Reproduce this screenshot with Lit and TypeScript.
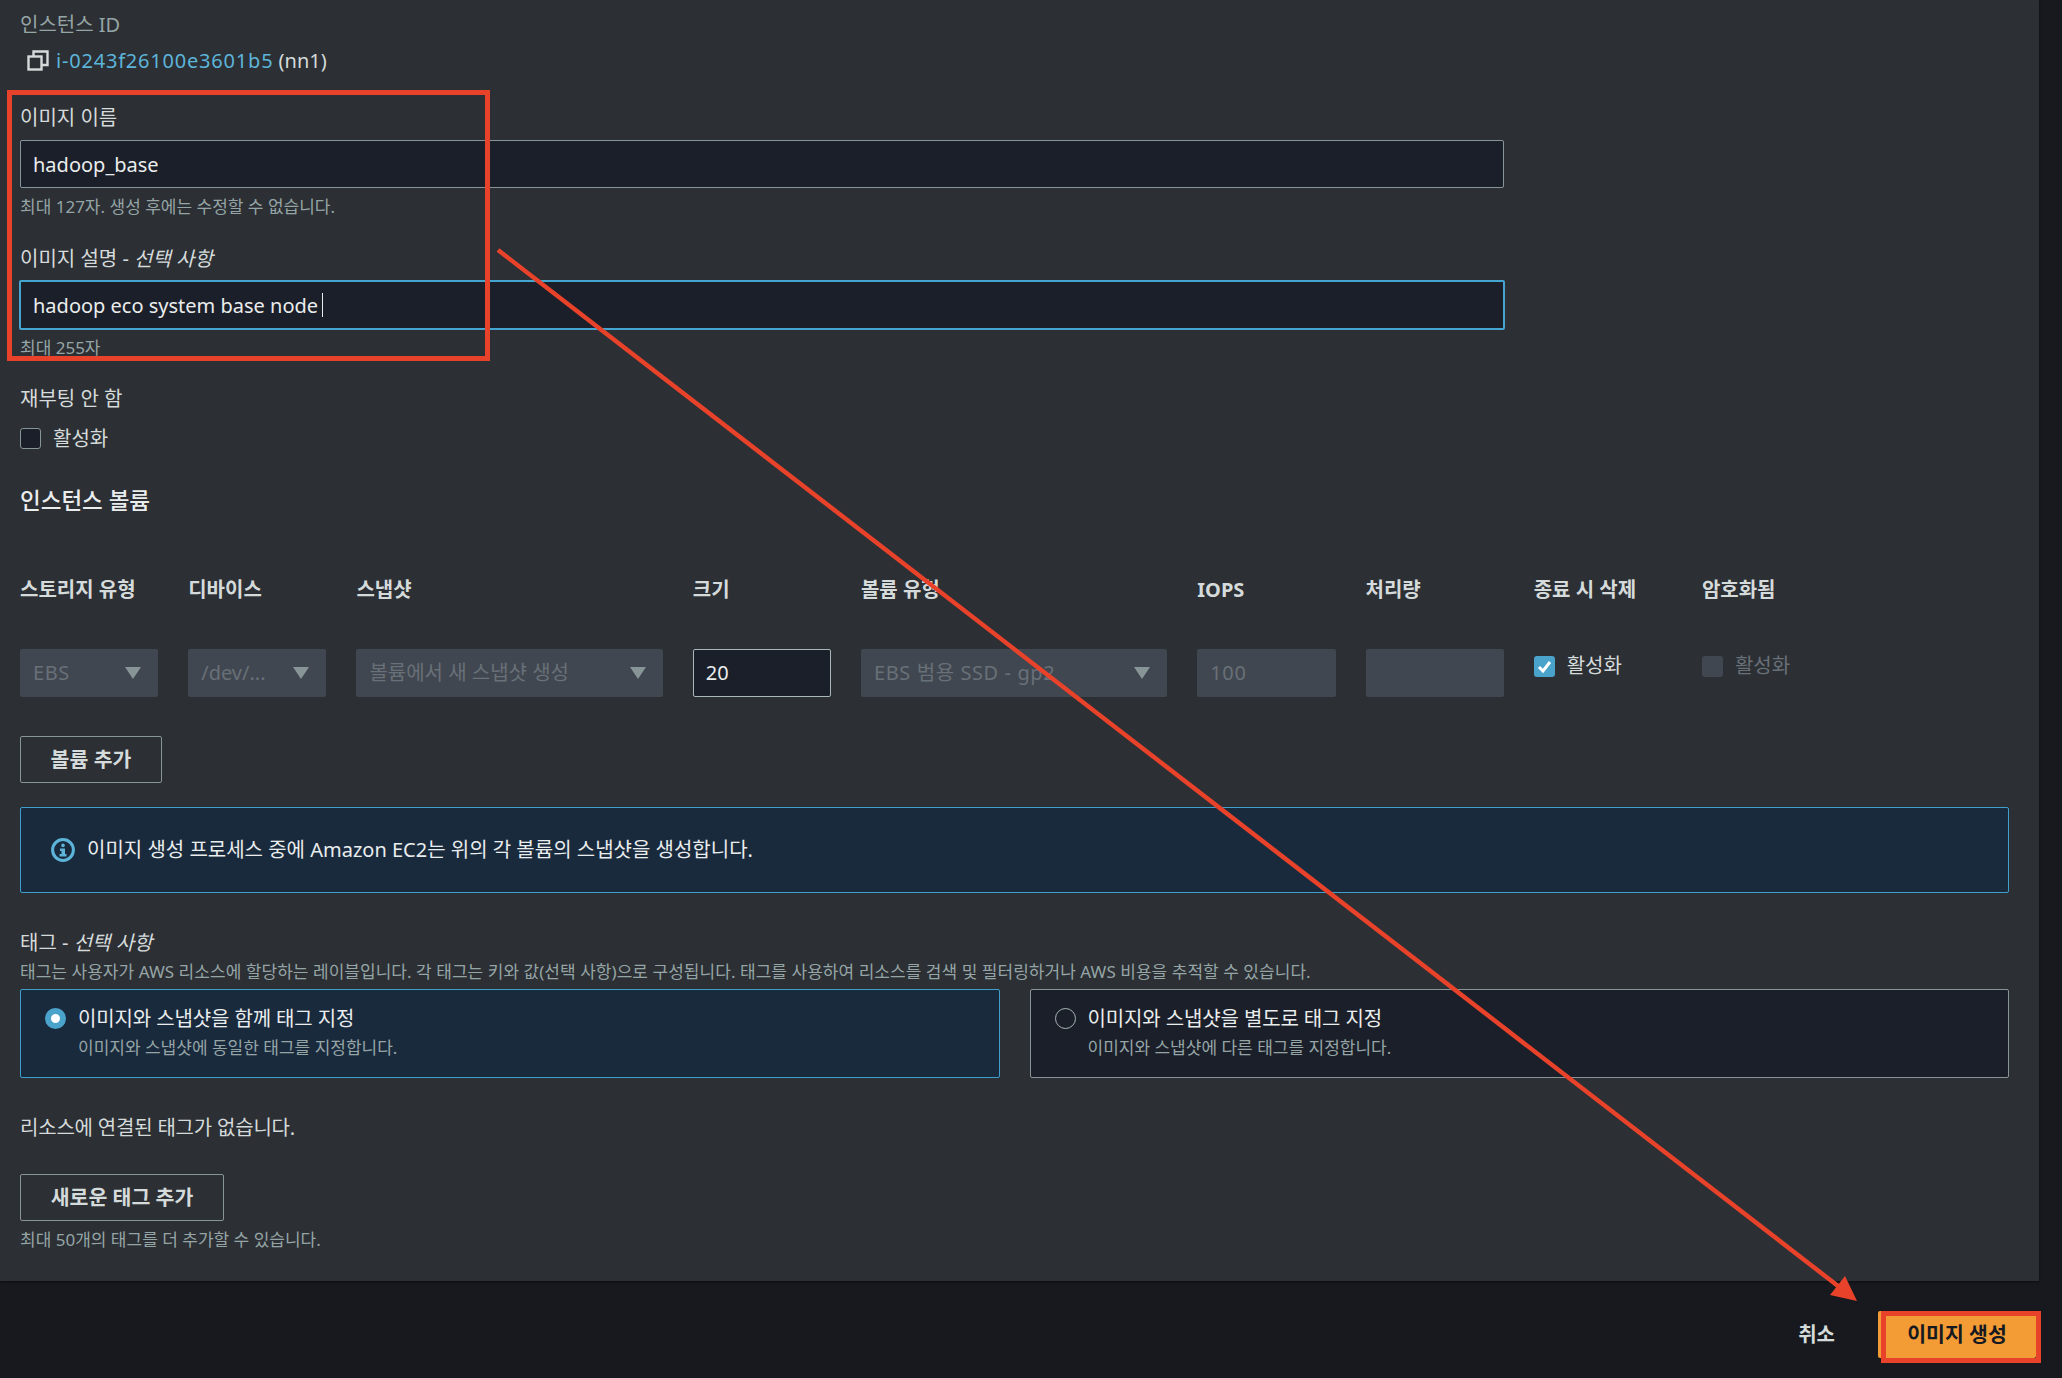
import { LitElement, html, css } from "lit";
import { customElement } from "lit/decorators.js";

interface VolumeColumn {
  title: string;
  span?: number;
}

const COLUMNS: VolumeColumn[] = [
  { title: "스토리지 유형" },
  { title: "디바이스" },
  { title: "스냅샷", span: 2 },
  { title: "크기" },
  { title: "볼륨 유형", span: 2 },
  { title: "IOPS" },
  { title: "처리량" },
  { title: "종료 시 삭제" },
  { title: "암호화됨" },
];

@customElement("app-root")
export class AppRoot extends LitElement {
  static styles = css`
    :host {
      display: block;
      position: relative;
      width: 2062px;
      height: 1378px;
      overflow: hidden;
      background: #17191e;
      color: #d5dbdb;
      font-family: "Noto Sans", "Noto Sans CJK KR", sans-serif;
      font-size: 20px;
      line-height: 24px;
    }

    .panel {
      width: 2039px;
      height: 1281px;
      box-sizing: border-box;
      padding: 12px 30px 0 20px;
      background: #2c2f34;
      box-shadow: 0 1px 2px #0b0d10;
    }

    /* text rows sit 1px below their box centre */
    .row {
      height: 24px;
      line-height: 26px;
    }

    .muted {
      color: #95a5a6;
    }

    .instance {
      display: flex;
      align-items: center;
      gap: 7px;
      height: 24px;
      margin: 12px 0 33px 7px;
    }

    .instance svg {
      flex: none;
    }

    .instance span {
      padding-top: 2px;
    }

    .instance a {
      color: #5cb5d9;
      letter-spacing: 0.8px;
    }

    .field-input {
      display: flex;
      align-items: center;
      box-sizing: border-box;
      width: 1484px;
      height: 48px;
      margin-top: 11px;
      padding: 2px 12px 0;
      background: #1b1f29;
      border: 1px solid #879596;
      border-radius: 2px;
      color: #eaeded;
    }

    .field-input.focus {
      width: 1486px;
      height: 50px;
      margin: 10px 0 0 -1px;
      border: 2px solid #44a5d0;
    }

    .caret {
      width: 1px;
      height: 24px;
      margin: -2px 0 0 4px;
      background: #eaeded;
    }

    .help {
      height: 20px;
      font-size: 17px;
      line-height: 22px;
      color: #95a5a6;
    }

    .help.name {
      margin: 8px 0 30px;
    }

    .help.desc {
      margin: 7px 0 29px;
    }

    em {
      font-style: italic;
    }

    .check-row {
      display: flex;
      align-items: center;
      gap: 12px;
      height: 24px;
      margin-top: 16px;
    }

    .check-row span:last-child {
      padding-top: 2px;
    }

    .box {
      box-sizing: border-box;
      flex: none;
      width: 21px;
      height: 21px;
      background: #1b1f29;
      border: 1px solid #879596;
      border-radius: 3px;
    }

    .box.on {
      display: flex;
      align-items: center;
      justify-content: center;
      background: #4aa3cb;
      border: none;
    }

    .box.off {
      background: #414750;
      border: none;
    }

    h2 {
      height: 30px;
      margin: 35px 0 0;
      font-size: 22.5px;
      font-weight: 500;
      line-height: 32px;
      color: #eaeded;
    }

    .volumes {
      display: grid;
      grid-template-columns: repeat(11, 138.2px);
      column-gap: 30px;
      margin-top: 62px;
    }

    .head {
      font-weight: 700;
      white-space: nowrap;
    }

    .cell {
      display: flex;
      align-items: flex-start;
      height: 48px;
      margin-top: 48px;
    }

    .select,
    .disabled-input {
      display: flex;
      align-items: center;
      justify-content: space-between;
      box-sizing: border-box;
      width: 100%;
      height: 48px;
      padding: 0 17px 0 13px;
      background: #414750;
      border-radius: 2px;
      color: #687078;
      white-space: nowrap;
    }

    .latin {
      letter-spacing: 0.6px;
    }

    .select i {
      flex: none;
      width: 0;
      height: 0;
      border-left: 8px solid transparent;
      border-right: 8px solid transparent;
      border-top: 12px solid #879596;
    }

    .size-input {
      display: flex;
      align-items: center;
      box-sizing: border-box;
      width: 100%;
      height: 48px;
      padding: 0 12px;
      background: #1b1f29;
      border: 1px solid #aab7b8;
      border-radius: 2px;
      color: #eaeded;
    }

    .inline-check {
      display: flex;
      align-items: center;
      gap: 12px;
      margin-top: 5px;
      white-space: nowrap;
    }

    .inline-check.off {
      color: #687078;
    }

    .button {
      display: flex;
      align-items: center;
      justify-content: center;
      box-sizing: border-box;
      height: 47px;
      padding-bottom: 2px;
      background: transparent;
      border: 1px solid #879596;
      border-radius: 2px;
      font-size: 20.5px;
      font-weight: 700;
      color: #d5dbdb;
    }

    .add-volume {
      width: 142px;
      margin-top: 39px;
    }

    .info {
      display: flex;
      align-items: center;
      gap: 12px;
      box-sizing: border-box;
      height: 86px;
      margin-top: 24px;
      padding-left: 30px;
      background: #1a2a3d;
      border: 1px solid #3f9fcc;
      border-radius: 2px;
      color: #eaeded;
    }

    .tag-label {
      margin-top: 37px;
    }

    .help.tag-desc {
      margin-top: 8px;
      line-height: 20px;
      letter-spacing: 0.04px;
    }

    .cards {
      display: flex;
      gap: 30px;
      margin-top: 7px;
    }

    .card {
      display: flex;
      gap: 12px;
      flex: 1;
      box-sizing: border-box;
      height: 89px;
      padding: 16px 24px;
      background: #1b1f29;
      border: 1px solid #879596;
      border-radius: 2px;
    }

    .card.selected {
      background: #1a2a3d;
      border-color: #3f9fcc;
    }

    .radio {
      box-sizing: border-box;
      flex: none;
      width: 21px;
      height: 21px;
      margin-top: 2px;
      border: 1px solid #aab7b8;
      border-radius: 50%;
    }

    .radio.on {
      border: 6px solid #4aa3cb;
      background: #fff;
    }

    .card-title {
      letter-spacing: -0.12px;
      color: #eaeded;
    }

    .card-sub {
      margin-top: 7px;
    }

    .no-tags {
      margin-top: 37px;
      letter-spacing: -0.2px;
    }

    .add-tag {
      width: 204px;
      margin-top: 35px;
    }

    .help.limit {
      margin-top: 8px;
    }

    .footer {
      display: flex;
      align-items: center;
      justify-content: flex-end;
      gap: 43px;
      height: 97px;
      padding: 10px 26px 0 0;
      box-sizing: border-box;
    }

    .cancel {
      font-weight: 700;
      color: #d5dbdb;
    }

    .primary {
      display: flex;
      align-items: center;
      justify-content: center;
      box-sizing: border-box;
      width: 158px;
      height: 47px;
      padding-bottom: 2px;
      background: #f39c36;
      border-radius: 2px;
      font-size: 20.5px;
      font-weight: 700;
      color: #16191f;
    }

    .annotations {
      position: absolute;
      inset: 0;
      pointer-events: none;
    }
  `;

  private renderCheck(on: boolean) {
    return html`
      <span class="inline-check ${on ? "" : "off"}">
        <span class="box ${on ? "on" : "off"}">
          ${on
            ? html`<svg width="15" height="15" viewBox="0 0 15 15">
                <path d="M2 8 L6 12 L13 3" fill="none" stroke="#fff" stroke-width="3" />
              </svg>`
            : ""}
        </span>
        활성화
      </span>
    `;
  }

  private renderVolumeRow() {
    return html`
      <div class="cell"><div class="select latin">EBS<i></i></div></div>
      <div class="cell"><div class="select">/dev/...<i></i></div></div>
      <div class="cell" style="grid-column: span 2">
        <div class="select">볼륨에서 새 스냅샷 생성<i></i></div>
      </div>
      <div class="cell"><div class="size-input">20</div></div>
      <div class="cell" style="grid-column: span 2">
        <div class="select latin">EBS 범용 SSD - gp2<i></i></div>
      </div>
      <div class="cell"><div class="disabled-input latin">100</div></div>
      <div class="cell"><div class="disabled-input"></div></div>
      <div class="cell">${this.renderCheck(true)}</div>
      <div class="cell">${this.renderCheck(false)}</div>
    `;
  }

  render() {
    return html`
      <div class="panel">
        <div class="row muted">인스턴스 ID</div>
        <div class="instance">
          <svg width="22" height="21" viewBox="0 0 22 21" fill="none" stroke="#d5dbdb" stroke-width="2.4">
            <rect x="1.5" y="6.5" width="13" height="13" />
            <path d="M6.5 6.5 V1.5 H20.5 V15 H14.5" />
          </svg>
          <span><a>i-0243f26100e3601b5</a> (nn1)</span>
        </div>

        <div class="row">이미지 이름</div>
        <div class="field-input">hadoop_base</div>
        <div class="help name">최대 127자. 생성 후에는 수정할 수 없습니다.</div>

        <div class="row">이미지 설명 - <em>선택 사항</em></div>
        <div class="field-input focus">hadoop eco system base node<span class="caret"></span></div>
        <div class="help desc">최대 255자</div>

        <div class="row">재부팅 안 함</div>
        <div class="check-row"><span class="box"></span><span>활성화</span></div>

        <h2>인스턴스 볼륨</h2>

        <div class="volumes">
          ${COLUMNS.map(
            (col) => html`<div
              class="row head"
              style=${col.span ? `grid-column: span ${col.span}` : ""}
            >
              ${col.title}
            </div>`
          )}
          ${this.renderVolumeRow()}
        </div>

        <div class="button add-volume">볼륨 추가</div>

        <div class="info">
          <svg width="24" height="24" viewBox="0 0 24 24">
            <circle cx="12" cy="12" r="10.4" fill="none" stroke="#5cb5d9" stroke-width="3" />
            <circle cx="12" cy="7.4" r="1.8" fill="#5cb5d9" />
            <path d="M9 10.5 H14 V16 H15.5 V18.5 H8.5 V16 H10.5 V13 H9 Z" fill="#5cb5d9" />
          </svg>
          <span>이미지 생성 프로세스 중에 Amazon EC2는 위의 각 볼륨의 스냅샷을 생성합니다.</span>
        </div>

        <div class="row tag-label">태그 - <em>선택 사항</em></div>
        <div class="help tag-desc">
          태그는 사용자가 AWS 리소스에 할당하는 레이블입니다. 각 태그는 키와 값(선택 사항)으로 구성됩니다. 태그를 사용하여 리소스를 검색 및 필터링하거나 AWS 비용을 추적할 수 있습니다.
        </div>

        <div class="cards">
          <div class="card selected">
            <span class="radio on"></span>
            <div>
              <div class="row card-title">이미지와 스냅샷을 함께 태그 지정</div>
              <div class="help card-sub">이미지와 스냅샷에 동일한 태그를 지정합니다.</div>
            </div>
          </div>
          <div class="card">
            <span class="radio"></span>
            <div>
              <div class="row card-title">이미지와 스냅샷을 별도로 태그 지정</div>
              <div class="help card-sub">이미지와 스냅샷에 다른 태그를 지정합니다.</div>
            </div>
          </div>
        </div>

        <div class="row no-tags">리소스에 연결된 태그가 없습니다.</div>
        <div class="button add-tag">새로운 태그 추가</div>
        <div class="help limit">최대 50개의 태그를 더 추가할 수 있습니다.</div>
      </div>

      <div class="footer">
        <span class="cancel">취소</span>
        <span class="primary">이미지 생성</span>
      </div>

      <svg class="annotations" width="2062" height="1378" viewBox="0 0 2062 1378" fill="none">
        <rect x="9.5" y="92.5" width="478" height="266" stroke="#e8432a" stroke-width="5" />
        <rect x="1883.5" y="1313.5" width="155" height="47" stroke="#e8432a" stroke-width="5" />
        <path d="M498 250 L1838 1286" stroke="#e8432a" stroke-width="4.5" />
        <path d="M1857 1301 L1830 1295 L1845 1276 Z" fill="#e8432a" />
      </svg>
    `;
  }
}

declare global {
  interface HTMLElementTagNameMap {
    "app-root": AppRoot;
  }
}
